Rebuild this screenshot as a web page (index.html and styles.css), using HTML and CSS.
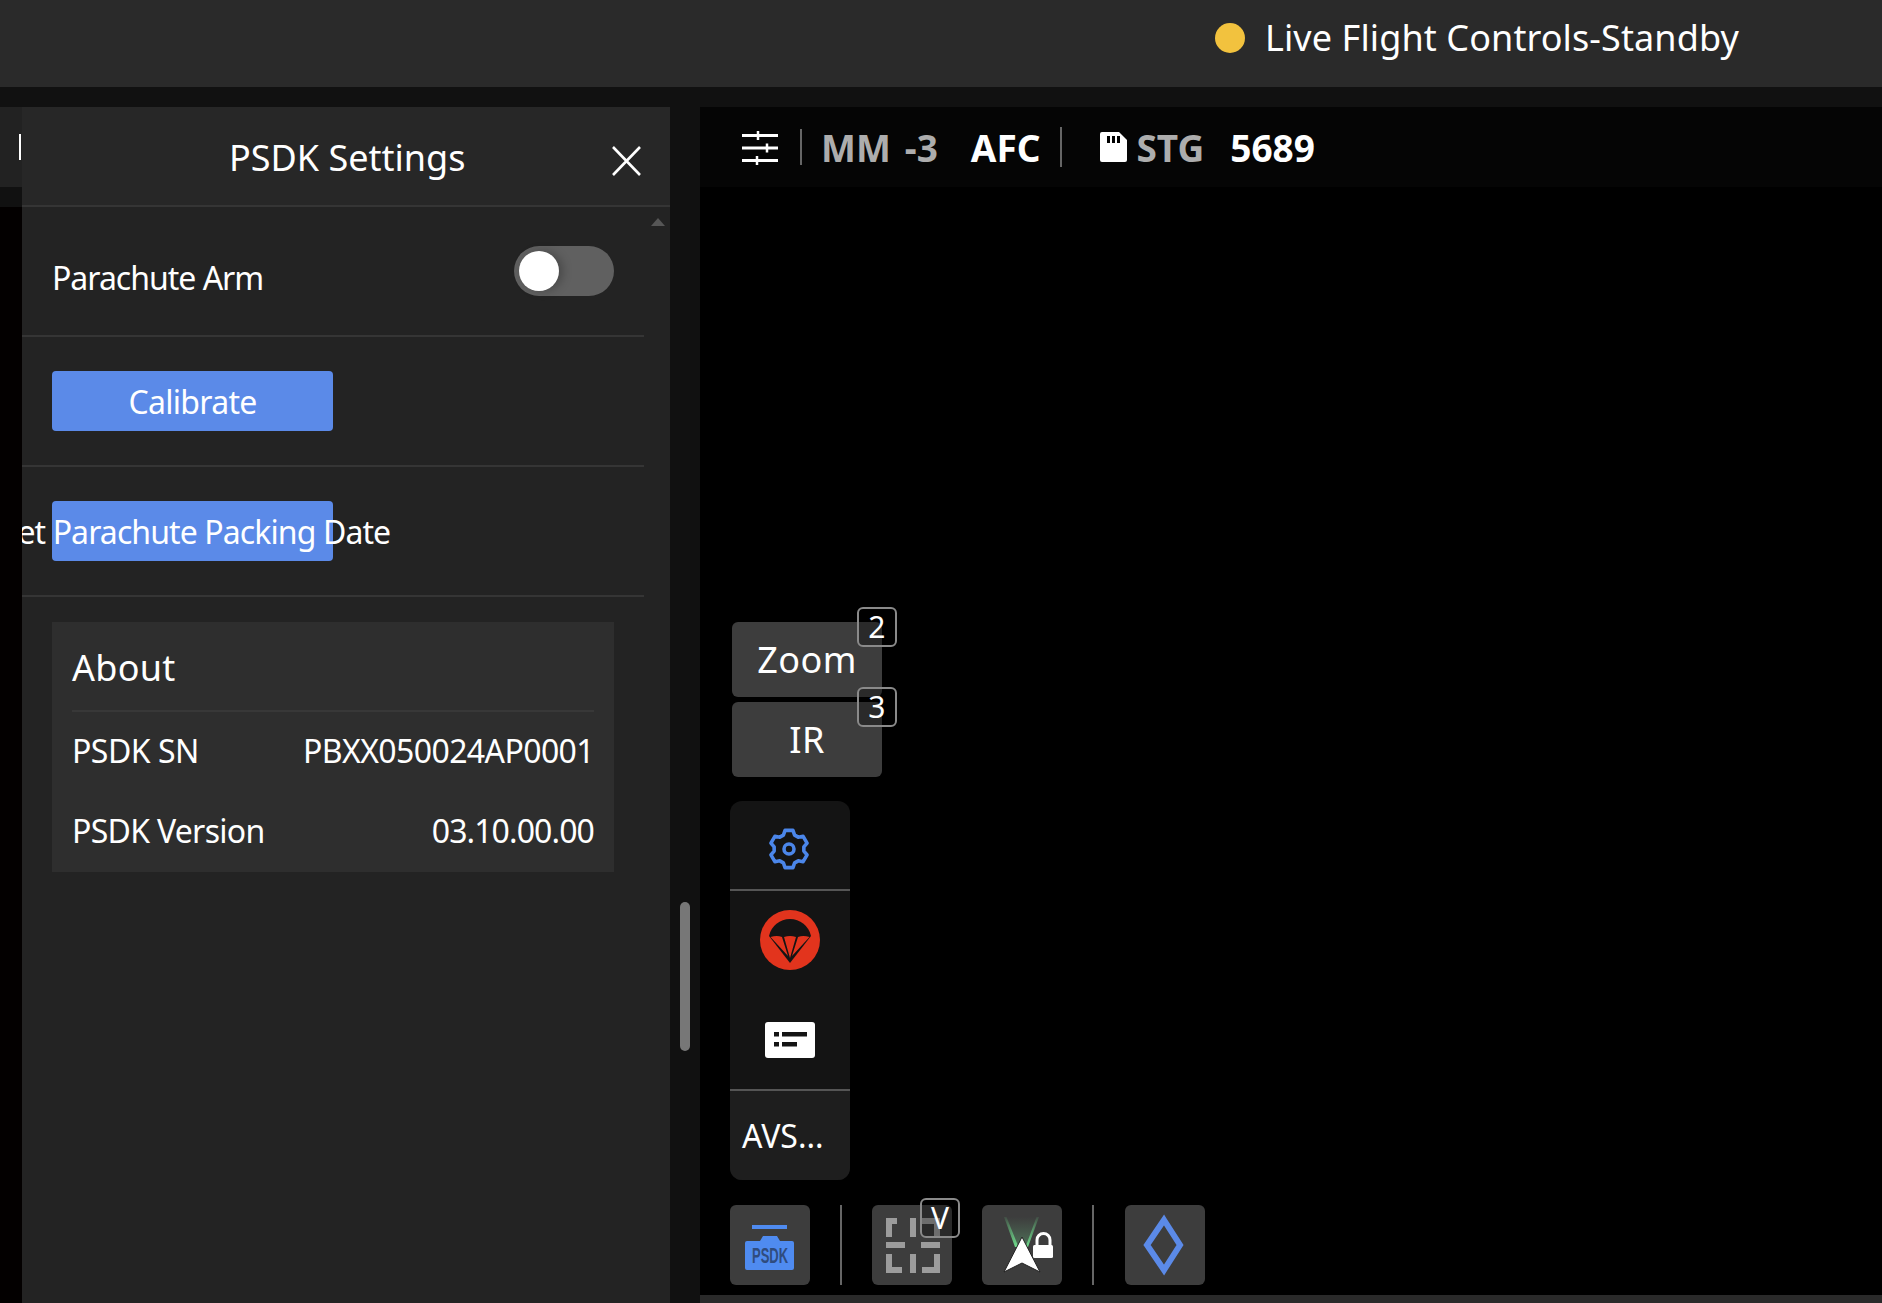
FILE: index.html
```html
<!DOCTYPE html>
<html lang="en">
<head>
<meta charset="utf-8">
<title>PSDK Settings</title>
<link rel="stylesheet" href="styles.css">
</head>
<body>
<div class="app">
  <header class="topbar">
    <span class="status-dot"></span>
    <span class="status-text">Live Flight Controls-Standby</span>
  </header>
  <main class="main">
    <div class="sliver">
      <div class="sliver-head"><span class="sliver-bar"></span></div>
      <div class="sliver-gap"></div>
      <div class="sliver-rest"></div>
    </div>
    <section class="panel">
      <div class="panel-head">
        <h1 class="panel-title">PSDK Settings</h1>
        <svg class="close" width="29" height="30" viewBox="0 0 29 30"><path d="M1 1 28 29M28 1 1 29" stroke="#fff" stroke-width="2.6" fill="none"/></svg>
      </div>
      <div class="panel-body">
        <span class="scroll-up"></span>
        <div class="row">
          <span class="row-label">Parachute Arm</span>
          <span class="toggle"><span class="knob"></span></span>
        </div>
        <div class="row">
          <button class="action">Calibrate</button>
        </div>
        <div class="row">
          <button class="action action-long">Set Parachute Packing Date</button>
        </div>
        <div class="about">
          <div class="about-head">About</div>
          <div class="about-row"><span>PSDK SN</span><span class="about-val">PBXX050024AP0001</span></div>
          <div class="about-row"><span class="about-key-long">PSDK Version</span><span class="about-ver">03.10.00.00</span></div>
        </div>
      </div>
    </section>
    <div class="gutter"><span class="thumb"></span></div>
    <section class="video">
      <div class="video-head">
        <svg class="ic-sliders" width="36" height="34" viewBox="0 0 36 34" fill="none" stroke="#fff">
          <path d="M0 4.5H36M0 17H36M0 29.5H36" stroke-width="3"/>
          <path d="M16 0V9M25 12.500V21.500M15 25V34" stroke-width="2.500"/>
        </svg>
        <span class="vsep vsep-a"></span>
        <span class="stat stat-mm">MM</span>
        <span class="stat stat-ev">-3</span>
        <span class="stat stat-afc">AFC</span>
        <span class="vsep vsep-b"></span>
        <svg class="ic-sd" width="27" height="30" viewBox="0 0 27 30"><path d="M2 0H19L27 8V28A2 2 0 0 1 25 30H2A2 2 0 0 1 0 28V2A2 2 0 0 1 2 0Z" fill="#fff"/><path d="M7 4H10V11H7ZM12 4H15V11H12ZM17 4H20V11H17Z" fill="#000"/></svg>
        <span class="stat stat-stg">STG</span>
        <span class="stat stat-num">5689</span>
      </div>
      <div class="video-body">
        <div class="lens-btns">
          <div class="lens">Zoom<span class="key key-lens">2</span></div>
          <div class="lens">IR<span class="key key-lens">3</span></div>
        </div>
        <div class="tools">
          <div class="tool tool-gear">
            <svg width="42" height="42" viewBox="-21 -21 42 42" fill="none" stroke="#4b86ea" stroke-width="3.600" stroke-linejoin="round">
              <path d="M-5.62-13.91-3.95-18.58H3.95L5.62-13.91 9.23-11.82 14.12-12.71 18.07-5.87 14.85-2.09V2.09L18.07 5.87 14.12 12.71 9.23 11.82 5.62 13.91 3.95 18.58H-3.95L-5.62 13.91-9.23 11.82-14.12 12.71-18.07 5.87-14.85 2.09V-2.09L-18.07-5.87-14.12-12.71-9.23-11.82Z"/>
              <circle r="5"/>
            </svg>
          </div>
          <div class="tool tool-chute">
            <svg width="60" height="60" viewBox="0 0 60 60">
              <circle cx="30" cy="30" r="30" fill="#e2341d"/>
              <path d="M9 26A21.500 21.500 0 0 1 51 26L30 53Z" fill="#141414"/>
              <path d="M10.500 27Q17 25 22 27L28 46ZM24 27Q30 25 36 27L30 48ZM38 27Q43 25 49.500 27L32 46Z" fill="#e2341d"/>
            </svg>
          </div>
          <div class="tool tool-card">
            <svg width="50" height="36" viewBox="0 0 50 36">
              <rect width="50" height="36" rx="3" fill="#fff"/>
              <path d="M9 10H14V14.500H9ZM17 10H42V14.500H17ZM9 20H14V24.500H9ZM17 20H32V24.500H17Z" fill="#141414"/>
            </svg>
          </div>
          <div class="tool-avs">AVS...</div>
        </div>
        <div class="dock">
          <div class="dock-btn">
            <svg width="80" height="80" viewBox="0 0 80 80">
              <rect x="22" y="20" width="35" height="4" fill="#4f8bf0"/>
              <path d="M17 36H30L33 31H47L50 36H62A2 2 0 0 1 64 38V63A2 2 0 0 1 62 65H17A2 2 0 0 1 15 63V38A2 2 0 0 1 17 36Z" fill="#4f8bf0"/>
              <text class="psdk-mark" transform="translate(40 58) scale(.59 1)" text-anchor="middle">PSDK</text>
            </svg>
          </div>
          <span class="dock-sep dock-sep-a"></span>
          <div class="dock-btn">
            <svg width="80" height="80" viewBox="0 0 80 80" fill="#9c9c9c">
              <path d="M14 13H25V19H20V32H14ZM38 13H44V32H38ZM50 13H68V32H62V19H50ZM14 37H33V43H14ZM49 37H68V43H49ZM14 49H20V62H30V68H14ZM38 49H44V68H38ZM62 49H68V68H50V62H62Z"/>
            </svg>
            <span class="key key-v">V</span>
          </div>
          <div class="dock-btn dock-nav">
            <svg width="80" height="80" viewBox="0 0 80 80">
              <defs>
                <linearGradient id="cone" x1="0" y1="0" x2="0" y2="1">
                  <stop offset="0" stop-color="#6fd08a" stop-opacity="0"/>
                  <stop offset="1" stop-color="#6fd08a" stop-opacity=".45"/>
                </linearGradient>
                <linearGradient id="edge" x1="0" y1="0" x2="0" y2="1">
                  <stop offset="0" stop-color="#6fdc8c" stop-opacity=".1"/>
                  <stop offset="1" stop-color="#6fdc8c"/>
                </linearGradient>
              </defs>
              <path d="M22 12H57L40 50Z" fill="url(#cone)"/>
              <path d="M22 12 33 42H36.500L24.500 12ZM57 12 46 42H43.500L54.500 12Z" fill="url(#edge)"/>
              <path d="M40 32 58 67 40 58 22 67Z" fill="#fff" stroke="#222" stroke-width="1" stroke-linejoin="round"/>
              <rect x="51" y="40" width="20" height="13" rx="1.500" fill="#fff"/>
              <path d="M55 41V35A6.500 6.500 0 0 1 68 35V41" fill="none" stroke="#fff" stroke-width="3"/>
            </svg>
          </div>
          <span class="dock-sep dock-sep-b"></span>
          <div class="dock-btn">
            <svg width="80" height="80" viewBox="0 0 80 80"><path d="M39 15 55 40 39 65 22 40Z" fill="none" stroke="#5b8ae8" stroke-width="6"/></svg>
          </div>
        </div>
      </div>
      <div class="bottombar"></div>
    </section>
  </main>
</div>
</body>
</html>
```

FILE: styles.css
```css
* { box-sizing: border-box; }
html, body { margin: 0; height: 100%; background: #000; overflow: hidden; }
body { font-family: "Noto Sans", "Open Sans", sans-serif; color: #fff; }
.app { display: flex; flex-direction: column; height: 1303px; }

.topbar { height: 87px; flex: none; background: #2a2a2a; display: flex; align-items: center; padding-left: 1215px; }
.status-dot { width: 30px; height: 30px; border-radius: 50%; background: #f2c23e; flex: none; margin-bottom: 12px; }
.status-text { margin: 0 0 12px 20px; font-size: 36px; line-height: 1; letter-spacing: 0.1px; }

.main { flex: 1; min-height: 0; display: flex; background: #111; padding-top: 20px; }

.sliver { width: 22px; flex: none; display: flex; flex-direction: column; }
.sliver-head { height: 80px; background: #222; display: flex; padding: 27px 0 0 19px; }
.sliver-bar { width: 2px; height: 26px; background: #fff; }
.sliver-gap { height: 20px; background: #111; }
.sliver-rest { flex: 1; background: #030000; }

.panel { width: 648px; flex: none; background: #232323; display: flex; flex-direction: column; overflow: hidden; }
.panel-head { height: 100px; flex: none; background: #272727; border-bottom: 2px solid #353535; display: flex; align-items: center; padding: 0 29px 0 207px; }
.panel-title { margin: 4px 0 0; font-size: 36px; font-weight: 400; line-height: 1; }
.close { margin-left: auto; margin-top: 10px; }

.panel-body { position: relative; flex: 1; padding-right: 26px; }
.scroll-up { position: absolute; right: 5px; top: 11px; border: 7px solid transparent; border-top: 0; border-bottom: 8px solid #565656; }
.row { height: 130px; border-bottom: 2px solid #353535; padding-left: 30px; display: flex; align-items: center; }
.row-label { font-size: 32px; letter-spacing: -1px; margin-top: 12px; }
.toggle { margin-left: auto; margin-right: 30px; width: 100px; height: 50px; border-radius: 25px; background: #606060; padding: 5px; display: flex; }
.knob { width: 40px; height: 40px; border-radius: 50%; background: #fff; box-shadow: 4px 0 10px rgba(0,0,0,.25); }
.action { width: 281px; height: 60px; padding: 0; border: 0; border-radius: 4px; background: #5b8ae8; color: #fff; font: inherit; font-size: 32px; letter-spacing: -0.7px; display: flex; align-items: center; justify-content: center; white-space: nowrap; }
.action-long { padding-left: 6px; letter-spacing: -0.9px; }

.about { margin: 25px 0 0 30px; width: 562px; height: 250px; background: #2e2e2e; padding: 0 20px; }
.about-head { height: 90px; padding-top: 2px; border-bottom: 2px solid #383838; font-size: 36px; letter-spacing: 0.3px; display: flex; align-items: center; }
.about-row { height: 80px; padding-bottom: 3px; display: flex; align-items: center; justify-content: space-between; font-size: 32px; letter-spacing: -0.5px; }
.about-key-long { letter-spacing: -0.7px; }
.about-val { letter-spacing: -0.6px; }
.about-ver { letter-spacing: -0.9px; }

.gutter { width: 30px; flex: none; padding: 795px 0 0 10px; }
.thumb { display: block; width: 10px; height: 149px; border-radius: 5px; background: #777; }

.video { flex: 1; min-width: 0; display: flex; flex-direction: column; background: #000; }
.video-head { height: 80px; flex: none; background: #050505; display: flex; align-items: center; padding-left: 42px; font-size: 37px; font-weight: 700; line-height: 1; }
.ic-sliders { flex: none; margin-top: 2px; }
.vsep { width: 2px; background: #666; flex: none; }
.vsep-a { height: 36px; margin: 0 19px 0 22px; }
.vsep-b { height: 40px; margin: 0 38px 0 20px; }
.stat-mm, .stat-ev, .stat-stg { color: #adadad; }
.stat-ev { margin-left: 14px; }
.stat-afc { margin-left: 33px; }
.ic-sd { flex: none; margin-right: 9px; }
.stat-num { margin-left: 26px; }

.video-body { flex: 1; min-height: 0; padding: 435px 0 0 30px; display: flex; flex-direction: column; }
.lens-btns { display: flex; flex-direction: column; gap: 5px; padding-left: 2px; }
.lens { position: relative; width: 150px; height: 75px; border-radius: 6px; background: #3d3d3d; display: flex; align-items: center; justify-content: center; font-size: 36px; line-height: 1; letter-spacing: 0.4px; }
.key { position: absolute; width: 40px; height: 40px; border: 2px solid #8a8a8a; border-radius: 6px; background: rgba(0,0,0,.3); display: flex; align-items: center; justify-content: center; font-size: 30px; line-height: 1; }
.key-lens { right: -15px; top: -15px; }
.key-v { right: -8px; top: -7px; }

.tools { margin-top: 24px; width: 120px; height: 379px; border-radius: 12px; overflow: hidden; background: #141414; display: flex; flex-direction: column; }
.tool { display: flex; justify-content: center; align-items: center; flex: none; }
.tool-gear { height: 90px; border-bottom: 2px solid #555; padding: 8px 2px 0 0; }
.tool-chute { height: 98px; }
.tool-card { height: 102px; border-bottom: 2px solid #555; padding-top: 2px; }
.tool-avs { flex: 1; background: #1e1e1e; font-size: 32px; padding: 26px 0 0 12px; line-height: 1.2; }

.dock { margin-top: 25px; display: flex; align-items: center; }
.dock-btn { position: relative; width: 80px; height: 80px; border-radius: 6px; background: #3d3d3d; flex: none; display: flex; }
.dock-sep { width: 2px; height: 80px; background: #666; flex: none; }
.dock-sep-a { margin: 0 30px; }
.dock-sep-b { margin: 0 31px 0 30px; }
.dock-nav { margin-left: 30px; }
.psdk-mark { font-family: "Liberation Sans", sans-serif; font-size: 22px; font-weight: 700; fill: #2f4c7e; }

.bottombar { height: 8px; flex: none; background: #2a2a2a; }
```
